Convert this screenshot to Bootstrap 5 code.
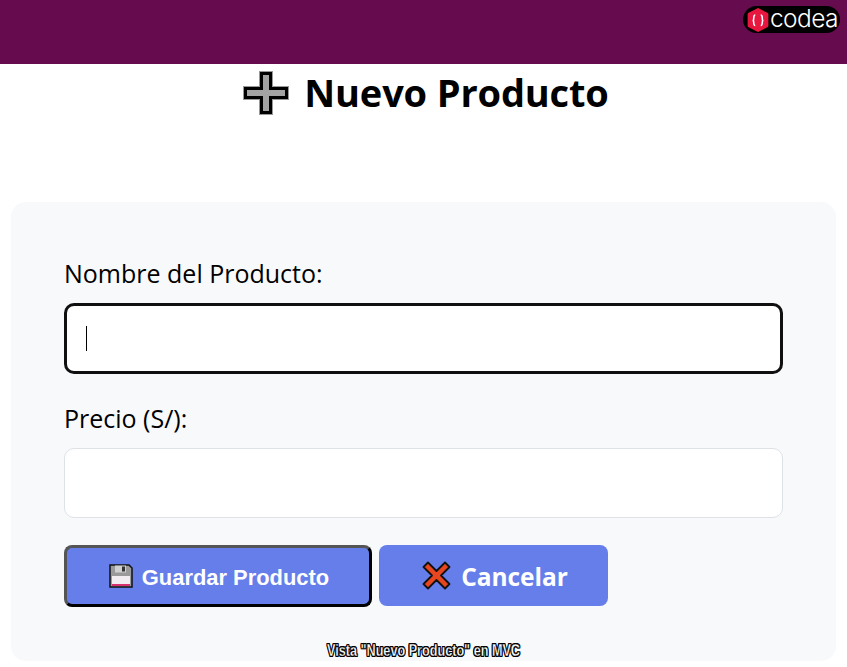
<!DOCTYPE html>
<html lang="es">
<head>
<meta charset="utf-8">
<title>Nuevo Producto</title>
<link href="https://cdn.jsdelivr.net/npm/bootstrap@5.3.0/dist/css/bootstrap.min.css" rel="stylesheet">
<style>
html,body{height:667px;overflow:hidden;background:#fff;}
body{font-family:"Open Sans","Noto Sans",sans-serif;color:#000;position:relative;}
.top-strip{height:64px;background:#660b4e;}
.logo-pill{position:absolute;top:6px;right:7px;width:97px;height:27px;background:#000;border-radius:14px;padding-left:4px;gap:1px;}
.logo-word{font-family:"Inter",sans-serif;font-size:24.5px;line-height:25px;color:#fff;font-weight:300;margin-top:-3px;letter-spacing:-.6px;}
.page-title{font-family:"Open Sans",sans-serif;font-weight:700;font-size:38px;line-height:56px;height:138px;gap:15px;margin:0;padding-left:5px;letter-spacing:-.15px;}
.title-mark{margin-top:7px;}
.form-panel{margin:0 11px;height:459px;background:#f8f9fb;border-radius:15px;padding:53px;}
.field-label{font-size:25px;line-height:36px;display:block;height:38px;margin:0 0 10px;}
.field-box{height:70px;border:1px solid #dee2e6;border-radius:10px;background:#fff;box-shadow:none;}
.field-active{height:71px;border:3px solid #101010;}
.field-wrap{position:relative;}
.caret-mark{position:absolute;left:22px;top:23px;width:1px;height:25px;background:#000;}
.gap-a{margin-bottom:26px;}
.gap-b{margin-bottom:27px;}
.btn-save,.btn-cancel{background:#667eea;color:#fff;font-weight:700;border-radius:8px;display:flex;align-items:center;justify-content:center;}
.btn-save{width:308px;height:62px;margin-right:7px;font-family:"Liberation Sans",Arial,sans-serif;font-size:21.9px;border:3px solid;border-color:#555 #000 #000 #555;gap:9px;padding:0 0 0 2px;}
.btn-save span{padding-top:5px;}
.btn-cancel{width:229px;height:61px;font-size:24.5px;border:0;gap:10px;letter-spacing:-.05px;padding:0 0 0 3px;}
.btn-cancel span{padding-top:4px;}
.btn-save:hover,.btn-cancel:hover{background:#667eea;color:#fff;}
.foot-cap{position:absolute;left:0;right:0;top:641px;text-align:center;font-family:"Liberation Sans",sans-serif;font-weight:700;font-size:16px;line-height:20px;color:#fff;transform:scaleX(.79);-webkit-text-stroke:.3px #000;text-shadow:1px 0 0 #000,-1px 0 0 #000,0 1px 0 #000,0 -1px 0 #000,1px 1px 0 #000,-1px -1px 0 #000,1px -1px 0 #000,-1px 1px 0 #000;}
</style>
</head>
<body>
<header class="top-strip"></header>
<div class="logo-pill d-flex align-items-center">
  <svg width="22" height="24" viewBox="0 0 20 22" aria-hidden="true">
    <polygon points="10,1 18.500,5.500 18.500,16.500 10,21 1.500,16.500 1.500,5.500" fill="#e8173f" stroke="#e8173f" stroke-width="2" stroke-linejoin="round"/>
    <path d="M7.500 6.500c-2 0-1.200 3.500-1.600 4.500-.2.3-.5.500-.9.500.4 0 .7.2.9.5.4 1-.4 4 1.600 4M12.500 6.500c2 0 1.200 3.500 1.600 4.500.2.3.5.500.9.500-.4 0-.7.2-.9.5-.4 1 .4 4-1.600 4" fill="none" stroke="#fff" stroke-width="1.400"/>
  </svg>
  <span class="logo-word">codea</span>
</div>
<h1 class="page-title d-flex justify-content-center">
  <svg class="title-mark" width="46" height="44" viewBox="0 0 46 44" aria-hidden="true">
    <polygon points="17,1 29,1 29,16 45,16 45,28 29,28 29,43 17,43 17,28 1,28 1,16 17,16" fill="#a3a3a3" stroke="#999" stroke-width="2"/>
    <polygon points="18.500,2.500 27.500,2.500 27.500,17.500 43.500,17.500 43.500,26.500 27.500,26.500 27.500,41.500 18.500,41.500 18.500,26.500 2.500,26.500 2.500,17.500 18.500,17.500" fill="#a3a3a3" stroke="#000" stroke-width="3"/>
  </svg>
  <span>Nuevo Producto</span>
</h1>
<main class="form-panel">
  <form>
    <label class="field-label" for="nombre">Nombre del Producto:</label>
    <div class="field-wrap gap-a">
      <input id="nombre" class="form-control field-box field-active" type="text">
      <span class="caret-mark"></span>
    </div>
    <label class="field-label" for="precio">Precio (S/):</label>
    <input id="precio" class="form-control field-box gap-b" type="text">
    <div class="d-flex align-items-start">
      <button type="button" class="btn btn-save">
        <svg width="24" height="24" viewBox="0 0 24 24" aria-hidden="true">
          <path d="M1 1h19l3 3v19H1z" fill="#9a9a9a" stroke="#111" stroke-width="1.500"/>
          <rect x="6" y="1.500" width="11" height="7" fill="#d0d0d0"/><rect x="13" y="2.500" width="3" height="5" fill="#333"/>
          <rect x="3" y="12" width="18" height="10" fill="#f1edf0"/><rect x="3" y="20" width="18" height="2" fill="#d8326e"/>
        </svg>
        <span>Guardar Producto</span>
      </button>
      <button type="button" class="btn btn-cancel">
        <svg width="29" height="29" viewBox="0 0 29 29" aria-hidden="true">
          <path d="M6 1.500 14.500 10 23 1.500 27.500 6 19 14.500 27.500 23 23 27.500 14.500 19 6 27.500 1.500 23 10 14.500 1.500 6z" fill="#e8461f" stroke="#111" stroke-width="1.800" stroke-linejoin="round"/>
        </svg>
        <span>Cancelar</span>
      </button>
    </div>
  </form>
</main>
<div class="foot-cap">Vista "Nuevo Producto" en MVC</div>
</body>
</html>
